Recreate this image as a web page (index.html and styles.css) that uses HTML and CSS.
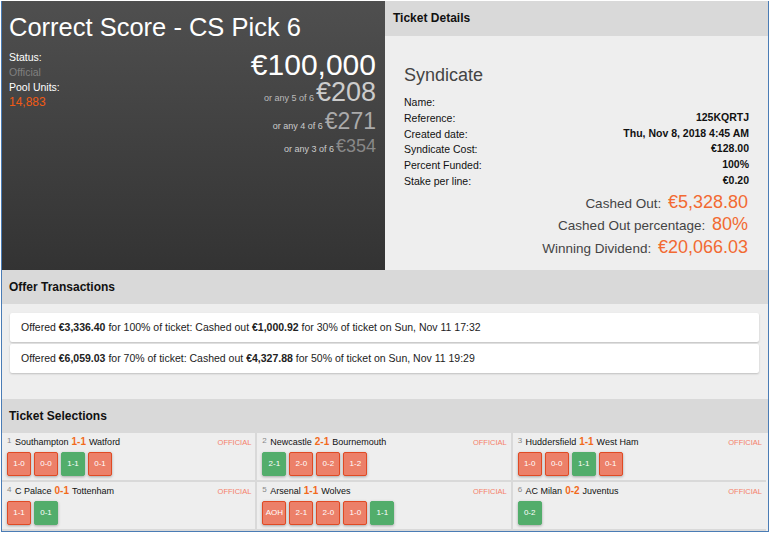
FILE: index.html
```html
<!DOCTYPE html>
<html>
<head>
    <title>Correct Score - CS Pick 6</title>
    <link rel="stylesheet" href="styles.css">
</head>
<body>
    <div class="ticket">
        <div class="top">
            <div class="pool">
                <h1>Correct Score - CS Pick 6</h1>
                <div class="pool-info">
                    <div class="pool-status">
                        <div class="st-label">Status:</div>
                        <div class="st-official">Official</div>
                        <div class="st-label">Pool Units:</div>
                        <div class="st-units">14,883</div>
                    </div>
                    <div class="prizes">
                        <div class="prize prize-6">€100,000</div>
                        <div class="prize prize-5"><small>or any 5 of 6</small>€208</div>
                        <div class="prize prize-4"><small>or any 4 of 6</small>€271</div>
                        <div class="prize prize-3"><small>or any 3 of 6</small>€354</div>
                    </div>
                </div>
            </div>
            <div class="details">
                <h2 class="bar">Ticket Details</h2>
                <div class="details-body">
                    <h3>Syndicate</h3>
                    <div class="row"><span>Name:</span><b></b></div>
                    <div class="row"><span>Reference:</span><b>125KQRTJ</b></div>
                    <div class="row"><span>Created date:</span><b>Thu, Nov 8, 2018 4:45 AM</b></div>
                    <div class="row"><span>Syndicate Cost:</span><b>€128.00</b></div>
                    <div class="row"><span>Percent Funded:</span><b>100%</b></div>
                    <div class="row"><span>Stake per line:</span><b>€0.20</b></div>
                    <div class="cash first">Cashed Out: <em>€5,328.80</em></div>
                    <div class="cash">Cashed Out percentage: <em>80%</em></div>
                    <div class="cash">Winning Dividend: <em>€20,066.03</em></div>
                </div>
            </div>
        </div>

        <h2 class="bar">Offer Transactions</h2>
        <div class="offers">
            <div class="offer">Offered <b>€3,336.40</b> for 100% of ticket: Cashed out <b>€1,000.92</b> for 30% of ticket on Sun, Nov 11 17:32</div>
            <div class="offer">Offered <b>€6,059.03</b> for 70% of ticket: Cashed out <b>€4,327.88</b> for 50% of ticket on Sun, Nov 11 19:29</div>
        </div>

        <h2 class="bar">Ticket Selections</h2>
        <div class="legs">
            <div class="leg">
                <div class="leg-head"><sup>1</sup> Southampton <strong>1-1</strong> Watford<i>OFFICIAL</i></div>
                <div class="picks"><span class="pick">1-0</span><span class="pick">0-0</span><span class="pick win">1-1</span><span class="pick">0-1</span></div>
            </div>
            <div class="leg">
                <div class="leg-head"><sup>2</sup> Newcastle <strong>2-1</strong> Bournemouth<i>OFFICIAL</i></div>
                <div class="picks"><span class="pick win">2-1</span><span class="pick">2-0</span><span class="pick">0-2</span><span class="pick">1-2</span></div>
            </div>
            <div class="leg">
                <div class="leg-head"><sup>3</sup> Huddersfield <strong>1-1</strong> West Ham<i>OFFICIAL</i></div>
                <div class="picks"><span class="pick">1-0</span><span class="pick">0-0</span><span class="pick win">1-1</span><span class="pick">0-1</span></div>
            </div>
            <div class="leg">
                <div class="leg-head"><sup>4</sup> C Palace <strong>0-1</strong> Tottenham<i>OFFICIAL</i></div>
                <div class="picks"><span class="pick">1-1</span><span class="pick win">0-1</span></div>
            </div>
            <div class="leg">
                <div class="leg-head"><sup>5</sup> Arsenal <strong>1-1</strong> Wolves<i>OFFICIAL</i></div>
                <div class="picks"><span class="pick">AOH</span><span class="pick">2-1</span><span class="pick">2-0</span><span class="pick">1-0</span><span class="pick win">1-1</span></div>
            </div>
            <div class="leg">
                <div class="leg-head"><sup>6</sup> AC Milan <strong>0-2</strong> Juventus<i>OFFICIAL</i></div>
                <div class="picks"><span class="pick win">0-2</span></div>
            </div>
        </div>
    </div>
</body>
</html>
```

FILE: styles.css
```css
* {
    box-sizing: border-box;
}
body {
    margin: 0;
    padding: 1px 1px 0 1px;
    background: #fff;
    font-family: "Liberation Sans", Arial, sans-serif;
    font-size: 10.5px;
    color: #111;
}
.ticket {
    width: 768px;
    border: 1px solid #4a7cb5;
    border-top: 0;
    background: #eee;
}
.top {
    display: flex;
    height: 269px;
}
.pool {
    width: 383px;
    padding: 12px 9px 0 7px;
    background: linear-gradient(#4f4f4f, #333);
    color: #fff;
}
h1 {
    margin: 0;
    font-size: 25.5px;
    font-weight: normal;
    line-height: 29px;
}
.pool-info {
    display: flex;
    justify-content: space-between;
    margin-top: 7px;
}
.pool-status {
    padding-top: 1px;
    line-height: 15px;
}
.st-official {
    color: #808080;
}
.st-units {
    color: #f05a14;
    font-size: 12px;
}
.prizes {
    text-align: right;
}
.prize small {
    margin-right: 2px;
    font-size: 9px;
    line-height: 0;
}
.prize-6 {
    font-size: 30px;
    line-height: 32px;
}
.prize-5 {
    font-size: 27px;
    line-height: 22px;
    color: #ccc;
}
.prize-4 {
    margin-top: 7px;
    font-size: 23px;
    line-height: 22px;
    color: #aaa;
}
.prize-3 {
    margin-top: 3px;
    font-size: 18px;
    line-height: 22px;
    color: #888;
}
.prize-5 small {
    color: #bbb;
}
.prize-4 small, .prize-3 small {
    color: #ccc;
}
.details {
    flex: 1;
}
.bar {
    margin: 0;
    height: 34px;
    padding: 0 7px;
    background: #d9d9d9;
    font-size: 12px;
    font-weight: bold;
    line-height: 35px;
    color: #111;
}
.details .bar {
    height: 35px;
    padding: 0 8px;
}
.details-body {
    padding: 28px 19px 0 19px;
}
h3 {
    margin: 0 0 8px;
    font-size: 18px;
    font-weight: normal;
    line-height: 22px;
    color: #444;
}
.row {
    display: flex;
    justify-content: space-between;
    height: 15.8px;
    line-height: 15px;
}
.row span {
    padding-top: 1px;
}
.cash {
    margin-right: 1px;
    text-align: right;
    font-size: 13.5px;
    line-height: 22.5px;
    color: #444;
}
.cash.first {
    margin-top: 4px;
}
.cash em {
    margin-left: 3px;
    font-size: 18px;
    font-style: normal;
    line-height: 0;
    color: #f26a32;
}
.offers {
    height: 95px;
    padding: 9px 9px 0 8px;
}
.offer {
    height: 29px;
    margin-bottom: 2px;
    padding: 0 11px;
    background: #fff;
    border-radius: 2px;
    box-shadow: 0 1px 2px rgba(0, 0, 0, .2);
    line-height: 29px;
    color: #222;
}
.legs {
    display: grid;
    grid-template-columns: repeat(3, 1fr);
    gap: 2px;
    margin-right: 2px;
    background: #d9d9d9;
    border-bottom: 2px solid #d9d9d9;
}
.leg {
    height: 47px;
    padding: 1px 4px 0 5px;
    background: #eee;
}
.leg-head {
    display: flex;
    align-items: baseline;
    gap: 3px;
    font-size: 9px;
    line-height: 16px;
}
.leg-head sup {
    margin-right: .5px;
    color: #888;
    font-size: 8px;
    line-height: 8px;
    vertical-align: baseline;
    position: relative;
    top: -2px;
}
.leg-head strong {
    font-size: 10px;
    color: #f26a1c;
}
.leg-head i {
    margin-left: auto;
    font-size: 7.5px;
    font-style: normal;
    color: #f5806a;
}
.picks {
    display: flex;
    gap: 3px;
    margin-top: 1px;
}
.pick {
    width: 24px;
    height: 24px;
    background: #ec8069;
    border: 1px solid #e04a24;
    border-radius: 2px;
    box-shadow: 0 1px 3px rgba(0, 0, 0, .3);
    color: #fff;
    font-size: 8px;
    line-height: 22px;
    text-align: center;
}
.pick.win {
    background: #52ad6b;
    border-color: #52ad6b;
}
```
